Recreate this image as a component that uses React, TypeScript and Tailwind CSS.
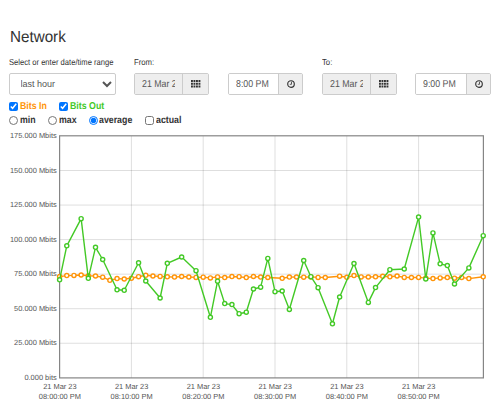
import React from "react";

const X0 = 59.6;
const STEP = 7.18;

const bitsOut: [number, number][] = [
  [0, 279.8], [1, 245.8], [3, 218.7], [4, 278.3], [5, 247.3], [6, 259.5], [8, 289.8], [9, 290.3],
  [11, 262.8], [12, 281], [14, 298], [15, 263.3], [17, 257], [19, 270.7], [21, 317.3], [22, 281.2],
  [23, 303.6], [24, 304.6], [25, 313.7], [26, 312.2], [27, 289], [28, 287.2], [29, 258.4], [30, 291.7],
  [31, 291], [32, 309.5], [34, 260.5], [35, 276.7], [36, 287.7], [38, 323.8], [39, 297], [41, 263.5],
  [43, 302.4], [44, 287.6], [46, 269.7], [48, 269], [50, 217.1], [51, 279], [52, 232.9], [53, 263.8],
  [54, 265.6], [55, 284], [57, 267.9], [59, 235.7],
];

const bitsIn: [number, number][] = [
  [0, 276.6], [1, 275.6], [2, 275.4], [3, 275], [4, 275.8], [5, 276], [6, 277.2], [7, 280.3],
  [8, 278.6], [9, 279], [10, 278.2], [11, 276.7], [12, 275.3], [13, 276], [14, 276.4], [15, 276.8],
  [16, 277.1], [17, 276.5], [18, 277], [19, 277.4], [20, 277.2], [21, 277.9], [22, 276.9], [23, 277.6],
  [24, 276.6], [25, 276.7], [26, 277.6], [27, 276.5], [28, 277.1], [29, 277.5], [31, 278.3], [32, 277.1],
  [33, 277], [34, 277.2], [35, 276.9], [36, 277.4], [37, 277.5], [39, 276.2], [40, 277.3], [41, 275.6],
  [42, 276.9], [43, 277], [44, 276.8], [45, 276.3], [46, 276.8], [47, 276], [48, 277.4], [49, 277.5],
  [50, 277.4], [51, 278.1], [52, 278.6], [53, 277.9], [54, 277.6], [55, 278.2], [56, 277.4], [57, 278.6],
  [59, 276.8],
];

const yLabels = ["175.000 Mbits", "150.000 Mbits", "125.000 Mbits", "100.000 Mbits", "75.000 Mbits", "50.000 Mbits", "25.000 Mbits", "0.000 bits"];
const xLabels = ["08:00:00 PM", "08:10:00 PM", "08:20:00 PM", "08:30:00 PM", "08:40:00 PM", "08:50:00 PM"];

function Series({ data, color }: { data: [number, number][]; color: string }) {
  return (
    <g stroke={color} strokeWidth="1.4">
      <polyline fill="none" strokeLinejoin="round" points={data.map(([i, y]) => `${X0 + i * STEP},${y}`).join(" ")} />
      {data.map(([i, y]) => (
        <circle key={i} cx={X0 + i * STEP} cy={y} r="2.05" fill="#fff" />
      ))}
    </g>
  );
}

function Chart() {
  return (
    <svg className="block h-[275px] w-[500px] shrink-0" viewBox="0 128 500 275">
      <g stroke="#000" strokeOpacity="0.13" strokeWidth="1">
        {yLabels.slice(1, 7).map((label, i) => (
          <line key={label} x1="60" x2="483" y1={170.5 + i * 34.55} y2={170.5 + i * 34.55} />
        ))}
        {xLabels.slice(1).map((label, i) => (
          <line key={label} y1="136" y2="378" x1={131.4 + i * 71.8} x2={131.4 + i * 71.8} />
        ))}
      </g>
      <rect x="59.6" y="135.8" width="423.8" height="242.1" fill="none" stroke="#858585" strokeWidth="1.2" />
      <Series data={bitsIn} color="#ff9408" />
      <Series data={bitsOut} color="#43c926" />
      <g fill="#545454" fontSize="7.45" fontFamily="'Liberation Sans', Arial, sans-serif">
        {yLabels.map((label, i) => (
          <text key={label} x="56.7" y={138.3 + i * 34.5} textAnchor="end">{label}</text>
        ))}
        {xLabels.map((label, i) => (
          <g key={label} textAnchor="middle">
            <text x={59.9 + i * 71.75} y="388.5">21 Mar 23</text>
            <text x={59.9 + i * 71.75} y="399.3">{label}</text>
          </g>
        ))}
      </g>
    </svg>
  );
}

function GridIcon() {
  return (
    <svg className="-mt-px h-[8px] w-[10px]" viewBox="0 0 10 8" fill="#333">
      {[0, 2.75, 5.5].map((y) =>
        [0, 2.5, 5, 7.5].map((x) => <rect key={`${x}-${y}`} x={x} y={y} width="1.9" height="2" />)
      )}
    </svg>
  );
}

function ClockIcon() {
  return (
    <svg className="h-[8px] w-[8px]" viewBox="0 0 8 8" fill="none" stroke="#333">
      <circle cx="4" cy="4" r="3.3" strokeWidth="1.15" />
      <path d="M4.5 1.8V4.3H2.8" strokeWidth="0.8" />
    </svg>
  );
}

function Field({ value, date, className }: { value: string; date?: boolean; className: string }) {
  return (
    <div className={`flex h-[22px] overflow-hidden rounded-[2px] border border-[#ccc] text-[#555] ${className}`}>
      <div className={`flex min-w-0 flex-1 items-center pl-[7px] pt-[2px] ${date ? "bg-[#eee] pr-[7px]" : "bg-white"}`}>
        <div className="overflow-hidden">
          <span className="block origin-left scale-x-[0.88] whitespace-nowrap text-[10px] leading-[12px]">{value}</span>
        </div>
      </div>
      <div className={`flex shrink-0 items-center justify-center border-l border-[#ccc] bg-[#eee] ${date ? "w-[26px]" : "w-[24px]"}`}>
        {date ? <GridIcon /> : <ClockIcon />}
      </div>
    </div>
  );
}

function Option({ label, type, checked, className }: { label: string; type: "radio" | "checkbox"; checked?: boolean; className: string }) {
  return (
    <label className={`flex items-center gap-[1.5px] whitespace-nowrap text-[10px] font-bold leading-[12px] ${className}`}>
      <input type={type} defaultChecked={checked} name={type === "radio" ? "aggregation" : undefined} className="m-0 -mt-px h-[9px] w-[9px] shrink-0" />
      <span className="origin-left scale-x-[0.88]">{label}</span>
    </label>
  );
}

export default function App() {
  return (
    <main className="flex h-[403px] w-[500px] flex-col overflow-hidden bg-white font-['Liberation_Sans',Arial,sans-serif] text-[#333] [text-rendering:geometricPrecision]">
      <h1 className="ml-[9.5px] mt-[29px] h-[17px] origin-left scale-x-[0.95] text-[16px] leading-[18px]">Network</h1>
      <div className="mt-[10px] flex h-[12px] text-[8.6px] leading-[12px]">
        <span className="ml-[9.2px] w-[125.3px] origin-left scale-x-[0.885] whitespace-nowrap">Select or enter date/time range</span>
        <span className="w-[187.5px] origin-left scale-x-[0.9]">From:</span>
        <span className="origin-left scale-x-[0.9]">To:</span>
      </div>
      <div className="mt-[5px] flex">
        <select className="ml-[9px] h-[22px] w-[107px] rounded-[2px] border border-[#ccc] bg-white pl-[6.5px] pr-0 text-[9px] text-[#555]">
          <option>last hour</option>
        </select>
        <Field date value="21 Mar 23" className="ml-[18px] w-[75px]" />
        <Field value="8:00 PM" className="ml-[19px] w-[75px]" />
        <Field date value="21 Mar 23" className="ml-[19px] w-[75px]" />
        <Field value="9:00 PM" className="ml-[18px] w-[76px]" />
      </div>
      <div className="mt-[6px] flex h-[12px]">
        <Option type="checkbox" checked label="Bits In" className="ml-[9px] w-[50px] text-[#ff9408]" />
        <Option type="checkbox" checked label="Bits Out" className="text-[#43c926]" />
      </div>
      <div className="mb-px mt-[2px] flex h-[12px]">
        <Option type="radio" label="min" className="ml-[9px] w-[39px]" />
        <Option type="radio" label="max" className="w-[40.5px]" />
        <Option type="radio" checked label="average" className="w-[56.5px]" />
        <Option type="checkbox" label="actual" className="" />
      </div>
      <Chart />
    </main>
  );
}
